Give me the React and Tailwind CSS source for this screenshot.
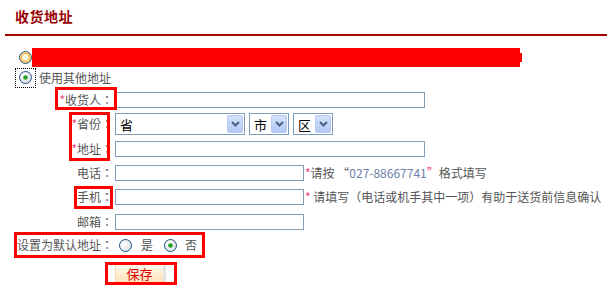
import React from 'react'

const font = { fontFamily: '"Noto Sans CJK SC", "Liberation Sans", sans-serif' }
const labelFont = { fontFamily: '"Noto Sans CJK TC", "Noto Sans CJK SC", sans-serif' }

function Radio({ checked, hover }) {
  return (
    <svg width="13" height="13" viewBox="0 0 13 13" className="shrink-0">
      <defs>
        <radialGradient id={hover ? 'rh' : 'rn'} cx="0.35" cy="0.35" r="0.8">
          <stop offset="0" stopColor="#ffffff" />
          <stop offset="1" stopColor={hover ? '#fbe3a4' : '#d8dde3'} />
        </radialGradient>
      </defs>
      <circle cx="6.5" cy="6.5" r="6" fill={`url(#${hover ? 'rh' : 'rn'})`} stroke="#1c5180" strokeWidth="1" />
      {hover && <circle cx="6.5" cy="6.5" r="4.3" fill="none" stroke="#f8b33a" strokeWidth="1.6" />}
      {checked && <circle cx="6.5" cy="6.5" r="2.3" fill="#21a121" />}
    </svg>
  )
}

function Select({ label, width }) {
  return (
    <div className={`h-[22px] ${width} border border-[#7f9db9] bg-white flex items-center justify-between pl-[4px] pr-[1px]`}>
      <span className="text-[13px] text-black leading-none">{label}</span>
      <span className="w-[16px] h-[18px] rounded-[2px] bg-gradient-to-b from-[#d5e2fc] to-[#b3c9f7] border border-[#b7c9f3] flex items-center justify-center">
        <svg width="9" height="6" viewBox="0 0 9 6">
          <path d="M1 1 L4.5 4.5 L8 1" fill="none" stroke="#4d6185" strokeWidth="2" />
        </svg>
      </span>
    </div>
  )
}

function Row({ label, star, h, children }) {
  return (
    <div className={`flex items-center ${h}`}>
      <div className="w-[115px] pr-[2px] text-right text-[12px] text-[#555] leading-none whitespace-nowrap" style={labelFont}>
        {star && <span className="text-[#f0407a]">*</span>}
        {label}
      </div>
      {children}
    </div>
  )
}

function Box({ className }) {
  return <div className={`absolute border-[3px] border-[#ff0000] ${className}`} />
}

export default function App() {
  return (
    <div className="relative w-[607px] h-[290px] bg-white overflow-hidden" style={font}>
      <div className="h-[34px] pl-[15px] pt-[9px] text-[14px] font-bold text-[#990000] leading-none tracking-[0.5px]">
        收货地址
      </div>
      <div className="h-[2px] ml-[5px] bg-[#a40000]" />

      <div className="mt-[11px] h-[20px] flex items-center pl-[19px]">
        <Radio hover />
        <div className="w-[488px] h-[19px] bg-[#ff0000]" />
        <div className="w-[2px] h-[9px] bg-[#ff0000]" />
      </div>

      <div className="h-[21px] flex items-center pl-[15px]">
        <div className="w-[21px] h-[20px] border border-dotted border-black flex items-center justify-center">
          <Radio checked />
        </div>
        <span className="ml-[3px] text-[12px] text-[#555] leading-none">使用其他地址</span>
      </div>

      <Row label="收货人：" star h="h-[23px]">
        <div className="w-[310px] h-[16px] border border-[#7f9db9]" />
      </Row>
      <Row label="省份：" star h="h-[26px]">
        <div className="flex gap-[4px]">
          <Select label="省" width="w-[130px]" />
          <Select label="市" width="w-[40px]" />
          <Select label="区" width="w-[40px]" />
        </div>
      </Row>
      <Row label="地址：" star h="h-[23px]">
        <div className="w-[310px] h-[16px] border border-[#7f9db9]" />
      </Row>
      <Row label="电话：" h="h-[25px]">
        <div className="w-[189px] h-[16px] border border-[#7f9db9]" />
        <span className="ml-[1px] text-[12px] text-[#555] leading-none whitespace-nowrap">
          <span className="text-[#f0407a]">*</span>请按 “<span className="text-[#6d7fab]">027-88667741</span>
          <span className="text-[#f0407a]">”</span>格式填写
        </span>
      </Row>
      <Row label="手机：" h="h-[24px]">
        <div className="w-[189px] h-[16px] border border-[#7f9db9]" />
        <span className="ml-[1px] text-[12px] text-[#555] leading-none whitespace-nowrap">
          <span className="text-[#f0407a]">*</span> 请填写（电话或机手其中一项）有助于送货前信息确认
        </span>
      </Row>
      <Row label="邮箱：" h="h-[25px]">
        <div className="w-[189px] h-[16px] border border-[#7f9db9]" />
      </Row>
      <Row label="设置为默认地址：" h="h-[22px]">
        <div className="flex items-center pl-[4px] text-[12px] text-[#555] leading-none">
          <Radio />
          <span className="ml-[9px]">是</span>
          <span className="ml-[11px]"><Radio checked /></span>
          <span className="ml-[8px]">否</span>
        </div>
      </Row>

      <div className="mt-[8px] pl-[115px] flex">
        <button className="w-[48px] h-[19px] bg-gradient-to-b from-[#fffaf0] to-[#fde2b6] border-l border-[#f3d9b0] text-[13px] text-[#e00000] leading-none">
          保存
        </button>
        <div className="w-[3px] h-[19px] bg-[#e4e4e4]" />
      </div>

      <Box className="left-[55px] top-[87px] w-[62px] h-[23px]" />
      <Box className="left-[69px] top-[112px] w-[41px] h-[49px]" />
      <Box className="left-[74px] top-[186px] w-[39px] h-[23px]" />
      <Box className="left-[14px] top-[232px] w-[191px] h-[26px]" />
      <Box className="left-[105px] top-[262px] w-[72px] h-[23px]" />
    </div>
  )
}
